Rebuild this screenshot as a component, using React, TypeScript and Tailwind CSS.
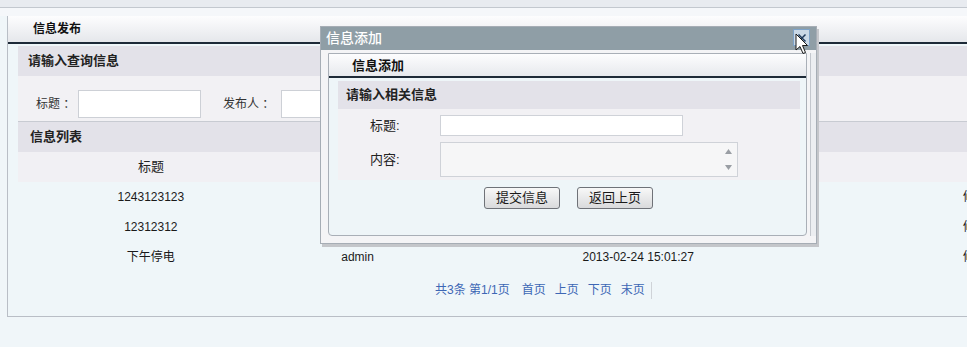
import React from "react";

const rows = [
  { title: "1243123123", user: "", time: "" },
  { title: "12312312", user: "", time: "" },
  { title: "下午停电", user: "admin", time: "2013-02-24 15:01:27" },
];

const Cursor = () => (
  <svg width="14" height="22" viewBox="0 0 14 22" className="absolute left-[795px] top-[33px]">
    <path
      d="M1 1 L1 17 L5 13.5 L8 20.5 L10.5 19.5 L7.5 12.5 L12.5 12.5 Z"
      fill="#ffffff"
      stroke="#1a1a1a"
      strokeWidth="1"
      strokeLinejoin="round"
    />
  </svg>
);

const Modal = () => (
  <div className="absolute left-[320px] top-[26px] w-[497px] h-[218px] border border-[#a6adb5] bg-[#f4f4f6] shadow-[2px_3px_0_#c4c6ca]">
    <div className="h-[23px] bg-[#8f9ea6] pl-[5px] text-[14px] leading-[23px] text-white font-medium">
      信息添加
    </div>
    <div className="absolute right-[6px] top-[2px] w-[17px] h-[17px] border border-[#7ea3c9] bg-[#c9d8e7] flex items-center justify-center">
      <svg width="10" height="10" viewBox="0 0 10 10">
        <path d="M1.5 1.5 L8.5 8.5 M8.5 1.5 L1.5 8.5" stroke="#1f3a5c" strokeWidth="1.5" />
      </svg>
    </div>
    <div className="flex pl-[7px] pt-[3px]">
      <div className="w-[479px] h-[183px] border border-[#a9afb7] rounded-b-[4px] bg-[#eef5f8] overflow-hidden">
        <div className="h-[24px] bg-gradient-to-b from-[#fdfdfe] to-[#e7e9ed] border-b-2 border-[#1e2a37] pl-[23px] text-[13px] leading-[24px] font-bold text-[#111]">
          信息添加
        </div>
        <div className="mt-[3px] ml-[9px] mr-[6px]">
          <div className="h-[28px] bg-[#e3e2e9] pl-[8px] text-[13px] leading-[28px] font-bold text-[#222]">
            请输入相关信息
          </div>
          <div className="bg-[#f2f1f4] pb-[3px]">
            <div className="flex items-center pt-[6px]">
              <div className="w-[102px] pl-[32px] text-[13px] text-[#222]">标题:</div>
              <div className="w-[243px] h-[21px] border border-[#cfd2d8] bg-white" />
            </div>
            <div className="flex items-center pt-[6px]">
              <div className="w-[102px] pl-[32px] text-[13px] text-[#222]">内容:</div>
              <div className="relative w-[298px] h-[35px] border border-[#cfd2d8] bg-[#f6f6f7]">
                <svg width="7" height="5" viewBox="0 0 7 5" className="absolute right-[5px] top-[6px]">
                  <path d="M0 5 L3.5 0 L7 5 Z" fill="#9a9ea4" />
                </svg>
                <svg width="7" height="5" viewBox="0 0 7 5" className="absolute right-[5px] bottom-[6px]">
                  <path d="M0 0 L3.5 5 L7 0 Z" fill="#9a9ea4" />
                </svg>
              </div>
            </div>
          </div>
          <div className="flex gap-[17px] pl-[146px] pt-[7px]">
            <div className="w-[76px] h-[22px] border border-[#6f7278] rounded-[3px] bg-gradient-to-b from-[#f8f8f8] to-[#d9dadc] text-[13px] leading-[20px] text-center text-[#1a1a1a]">
              提交信息
            </div>
            <div className="w-[76px] h-[22px] border border-[#6f7278] rounded-[3px] bg-gradient-to-b from-[#f8f8f8] to-[#d9dadc] text-[13px] leading-[20px] text-center text-[#1a1a1a]">
              返回上页
            </div>
          </div>
        </div>
      </div>
      <div className="ml-[3px] w-[6px] h-[183px] border-l border-[#c3c7cd] bg-[#eceef1]" />
    </div>
  </div>
);

export default function App() {
  return (
    <div className="relative w-[967px] h-[347px] overflow-hidden bg-[#f0f6f9] text-[12px] text-[#222] font-['Liberation_Sans','Noto_Sans_CJK_SC',sans-serif]">
      <div className="h-[8px] bg-[#e8ebf0] border-b border-[#c3c8cf]" />
      <div className="h-[8px] bg-[#f5f7fa]" />
      <div className="ml-[7px] w-[980px] h-[301px] border-l border-b border-[#b9bec6] bg-[#eff6f9]">
        <div className="h-[28px] bg-gradient-to-b from-[#fdfdfe] to-[#e5e7eb] border-b-2 border-[#1d2a38] pl-[25px] text-[12px] leading-[26px] font-bold text-[#111]">
          信息发布
        </div>
        <div className="pl-[10px] pt-[2px]">
          <div className="h-[30px] bg-[#e3e2e9] pl-[10px] text-[13px] leading-[30px] font-bold text-[#222]">
            请输入查询信息
          </div>
          <div className="h-[45px] bg-[#f2f1f4] flex items-center pt-[10px]">
            <div className="w-[60px] pl-[18px] text-[12px] whitespace-nowrap text-[#333]">标题 ：</div>
            <div className="w-[123px] h-[28px] border border-[#cdd0d6] bg-white" />
            <div className="ml-[22px] w-[58px] text-[12px] whitespace-nowrap text-[#333]">发布人 ：</div>
            <div className="w-[200px] h-[28px] border border-[#cdd0d6] bg-white" />
          </div>
          <div className="h-[31px] border-t border-[#c8cbd2] bg-[#e3e2e9] pl-[12px] text-[13px] leading-[30px] font-bold text-[#222]">
            信息列表
          </div>
          <div className="flex h-[30px] items-center bg-[#f1f0f4] text-[13px]">
            <div className="w-[266px] text-center">标题</div>
          </div>
          {rows.map((r, i) => (
            <div key={i} className="flex h-[30px] items-center text-[12px] text-[#1a1a1a]">
              <div className="w-[266px] text-center">{r.title}</div>
              <div className="w-[148px] text-center">{r.user}</div>
              <div className="w-[414px] text-center">{r.time}</div>
              <div className="pl-[118px] whitespace-nowrap">修改</div>
            </div>
          ))}
          <div className="flex h-[36px] items-center pl-[417px] text-[12px] text-[#3d67b5]">
            <span>共3条 第1/1页</span>
            <span className="ml-[12px]">首页</span>
            <span className="ml-[9px]">上页</span>
            <span className="ml-[9px]">下页</span>
            <span className="ml-[9px]">末页</span>
            <span className="ml-[6px] w-px h-[17px] bg-[#cfd3d8]" />
          </div>
        </div>
      </div>
      <Modal />
      <Cursor />
    </div>
  );
}
